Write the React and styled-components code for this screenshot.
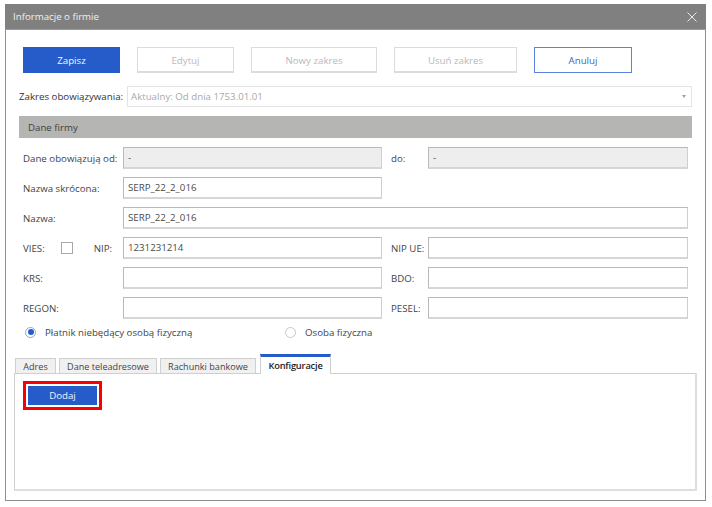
import React from "react";
import styled, { createGlobalStyle } from "styled-components";

const Global = createGlobalStyle`
  html, body { margin: 0; padding: 0; background: #fff; }
  body { font-family: "Open Sans", "Noto Sans", "Liberation Sans", sans-serif; font-size: 9.7px; color: #3a3a3a; }
  * { box-sizing: border-box; }
`;

const Window = styled.div`
  margin: 4px 0 0 5px;
  width: 701px;
  height: 497px;
  border: 1px solid #8e8e8e;
  border-top: none;
  display: flex;
  flex-direction: column;
`;
const TitleBar = styled.div`
  height: 26px;
  margin: 0 -1px;
  background: #808080;
  color: #f0f0f0;
  display: flex;
  align-items: center;
  justify-content: space-between;
  padding: 0 9px 0 8px;
  border-bottom: 1px solid #9a9a9a;
`;
const Close = styled.svg`
  width: 10px;
  height: 10px;
  stroke: #e8e8e8;
  stroke-width: 1;
  fill: none;
`;
const Toolbar = styled.div`
  display: flex;
  gap: 17px;
  margin: 17px 0 0 17px;
`;
const Button = styled.div`
  height: 26px;
  width: ${(p) => p.$w}px;
  display: flex;
  align-items: center;
  justify-content: center;
  padding-top: 1px;
  border: 1px solid #dcdcdc;
  border-width: 1px 1px 2px 1px;
  color: #b9b9b9;
  ${(p) => p.$primary && `background:#265cca;border-color:#265cca;color:#f4f6fc;`}
  ${(p) => p.$outline && `border:1px solid #5b84dc;color:#3b5fc0;`}
`;
const Section = styled.div`
  margin: 13px 13px 0 13px;
`;
const SelectRow = styled.div`
  display: flex;
  align-items: center;
  height: 21px;
`;
const SelectLabel = styled.div`
  width: 108px;
  color: #333;
  white-space: nowrap;
`;
const Select = styled.div`
  flex: 1;
  height: 21px;
  border: 1px solid #e4e4e4;
  color: #a9a9a9;
  display: flex;
  align-items: center;
  justify-content: space-between;
  padding: 0 5px 0 3px;
`;
const Caret = styled.span`
  width: 0;
  height: 0;
  border-left: 2.5px solid transparent;
  border-right: 2.5px solid transparent;
  border-top: 3px solid #a0a0a0;
`;
const SectionHeader = styled.div`
  height: 22px;
  margin-top: 9px;
  background: #b5b5b3;
  display: flex;
  align-items: center;
  padding: 1px 0 0 9px;
  color: #3f3f3f;
`;
const Form = styled.div`
  margin: 9px 4px 0 4px;
  display: grid;
  grid-template-columns: 100px 259px 46px 260px;
  grid-auto-rows: 22px;
  row-gap: 8px;
  align-items: center;
`;
const Label = styled.div`
  white-space: nowrap;
  color: #444;
  padding-left: ${(p) => (p.$side ? 9 : 0)}px;
`;
const Field = styled.div`
  height: 22px;
  grid-column: ${(p) => p.$span || "auto"};
  border: 1px solid #b9b9b9;
  border-bottom: 2px solid #d6d6d6;
  border-right-color: #cfcfcf;
  background: ${(p) => (p.$disabled ? "#eeeeef" : "#fff")};
  display: flex;
  align-items: center;
  padding-left: 4px;
  color: #4a4a4a;
`;
const ViesCell = styled.div`
  display: flex;
  align-items: center;
  color: #444;
`;
const Check = styled.span`
  width: 12px;
  height: 12px;
  border: 1px solid #a8a8a8;
  margin: 0 21px 0 16px;
`;
const RadioRow = styled.div`
  display: flex;
  align-items: center;
  height: 14px;
  margin: 6px 0 0 6px;
`;
const RadioItem = styled.div`
  display: flex;
  align-items: center;
  gap: 9px;
  width: ${(p) => p.$w}px;
  color: #444;
`;
const Radio = styled.span`
  width: 11px;
  height: 11px;
  border-radius: 50%;
  border: 1px solid ${(p) => (p.$on ? "#8aa5e0" : "#c8c8c8")};
  display: flex;
  align-items: center;
  justify-content: center;
  &::after {
    content: "";
    display: ${(p) => (p.$on ? "block" : "none")};
    width: 6px;
    height: 6px;
    border-radius: 50%;
    background: #265cca;
  }
`;
const TabsWrap = styled.div`
  margin: 14px 8px 0 8px;
  display: flex;
  flex-direction: column;
`;
const TabBar = styled.div`
  display: flex;
  align-items: flex-end;
  height: 20px;
  gap: 3px;
  margin-left: 1px;
`;
const Tab = styled.div`
  width: ${(p) => p.$w}px;
  height: ${(p) => (p.$active ? 20 : 15)}px;
  display: flex;
  align-items: center;
  justify-content: center;
  background: ${(p) => (p.$active ? "#fff" : "#f0f0f0")};
  border: 1px solid #cfcfcf;
  border-bottom: none;
  color: #444;
  font-size: 9.1px;
  white-space: nowrap;
  ${(p) =>
    p.$active &&
    `border-top:3px solid #265cca;font-size:9.3px;font-weight:600;letter-spacing:-0.2px;color:#222;position:relative;top:1px;z-index:1;margin-left:1px;`}
`;
const Panel = styled.div`
  height: 118px;
  border: 1px solid #cfcfcf;
  border-width: 1px 2px 2px 1px;
  border-right-color: #dedede;
  border-bottom-color: #dedede;
  padding: 7px 0 0 8px;
`;
const Highlight = styled.div`
  width: 79px;
  height: 29px;
  border: 3px solid #fa0000;
  padding: 2px;
`;
const AddButton = styled.div`
  height: 100%;
  background: #265cca;
  color: #f0f3fb;
  display: flex;
  align-items: center;
  justify-content: center;
`;

export default function App() {
  return (
    <Window>
      <Global />
      <TitleBar>
        <span>Informacje o firmie</span>
        <Close viewBox="0 0 10 10"><path d="M.5.5l9 9M9.5.5l-9 9" /></Close>
      </TitleBar>
      <Toolbar>
        <Button $w={97} $primary>Zapisz</Button>
        <Button $w={97}>Edytuj</Button>
        <Button $w={126}>Nowy zakres</Button>
        <Button $w={123}>Usuń zakres</Button>
        <Button $w={98} $outline>Anuluj</Button>
      </Toolbar>
      <Section>
        <SelectRow>
          <SelectLabel>Zakres obowiązywania:</SelectLabel>
          <Select>
            <span>Aktualny: Od dnia 1753.01.01</span>
            <Caret />
          </Select>
        </SelectRow>
        <SectionHeader>Dane firmy</SectionHeader>
        <Form>
          <Label>Dane obowiązują od:</Label>
          <Field $disabled>-</Field>
          <Label $side>do:</Label>
          <Field $disabled>-</Field>

          <Label>Nazwa skrócona:</Label>
          <Field>SERP_22_2_016</Field>
          <span />
          <span />

          <Label>Nazwa:</Label>
          <Field $span="2 / 5">SERP_22_2_016</Field>

          <ViesCell>VIES:<Check />NIP:</ViesCell>
          <Field>1231231214</Field>
          <Label $side>NIP UE:</Label>
          <Field />

          <Label>KRS:</Label>
          <Field />
          <Label $side>BDO:</Label>
          <Field />

          <Label>REGON:</Label>
          <Field />
          <Label $side>PESEL:</Label>
          <Field />
        </Form>
        <RadioRow>
          <RadioItem $w={260}><Radio $on />Płatnik niebędący osobą fizyczną</RadioItem>
          <RadioItem $w={120}><Radio />Osoba fizyczna</RadioItem>
        </RadioRow>
      </Section>
      <TabsWrap>
        <TabBar>
          <Tab $w={41}>Adres</Tab>
          <Tab $w={98}>Dane teleadresowe</Tab>
          <Tab $w={96}>Rachunki bankowe</Tab>
          <Tab $w={71} $active>Konfiguracje</Tab>
        </TabBar>
        <Panel>
          <Highlight>
            <AddButton>Dodaj</AddButton>
          </Highlight>
        </Panel>
      </TabsWrap>
    </Window>
  );
}
